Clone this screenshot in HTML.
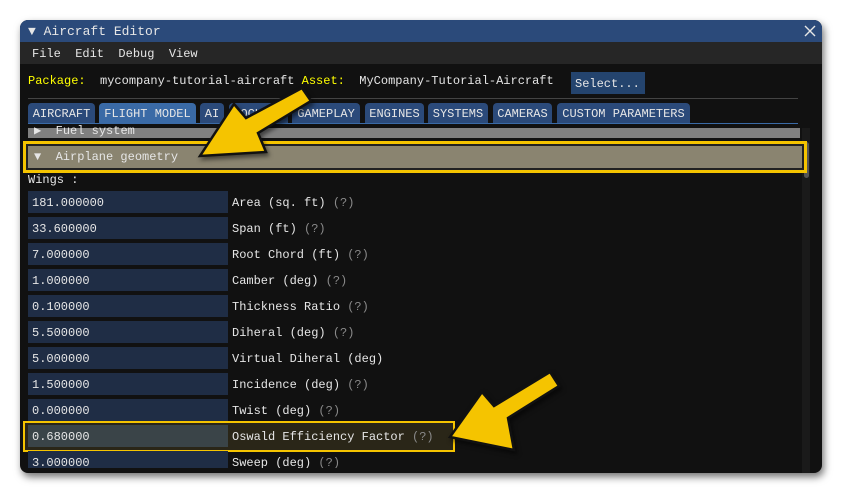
<!DOCTYPE html><html><head><style>
body{margin:0;width:842px;height:494px;background:#fff;position:relative;overflow:hidden;font-family:"Liberation Mono","DejaVu Sans Mono",monospace;font-size:12px;color:#e6e6e6}
.a{position:absolute;white-space:pre;line-height:14px}
#win{position:absolute;left:20px;top:20px;width:802px;height:453px;background:#111;border-radius:8px;overflow:hidden;box-shadow:2px 4px 8px rgba(0,0,0,.55)}
.tab{position:absolute;top:103px;height:20px;background:#2b4a7a;border-radius:4px 4px 0 0;line-height:22px;text-align:center}
.inp{position:absolute;left:28px;width:200px;height:22px;background:#1f2d45}
.g{color:#8a8a8a}
</style></head><body>
<div id="win"></div>
<div style="position:absolute;left:20px;top:20px;width:802px;height:22px;background:#2b4a7a;border-radius:8px 8px 0 0"></div>
<div class="a" style="left:28px;top:25px;font-size:13px">▼ Aircraft Editor</div>
<svg width="12" height="12" style="position:absolute;left:804px;top:25px"><path d="M1 1L11 11M11 1L1 11" stroke="#e6e6e6" stroke-width="1.4"/></svg>
<div style="position:absolute;left:20px;top:42px;width:802px;height:22px;background:#262626"></div>
<div class="a" style="left:32px;top:47px">File  Edit  Debug  View</div>
<div class="a" style="left:28px;top:74px"><span style="color:#ffff00">Package:</span>  mycompany-tutorial-aircraft <span style="color:#ffff00">Asset:</span>  MyCompany-Tutorial-Aircraft</div>
<div style="position:absolute;left:571px;top:72px;width:74px;height:22px;background:#24446e"></div>
<div class="a" style="left:575px;top:77px">Select...</div>
<div style="position:absolute;left:28px;top:98px;width:770px;height:1px;background:#444"></div>
<div class="tab" style="left:28px;width:67px">AIRCRAFT</div>
<div class="tab" style="left:99px;width:97px;background:#3a6aa6">FLIGHT MODEL</div>
<div class="tab" style="left:200px;width:24px">AI</div>
<div class="tab" style="left:229px;width:59px">COCKPIT</div>
<div class="tab" style="left:292px;width:68px">GAMEPLAY</div>
<div class="tab" style="left:365px;width:59px">ENGINES</div>
<div class="tab" style="left:428px;width:60px">SYSTEMS</div>
<div class="tab" style="left:493px;width:59px">CAMERAS</div>
<div class="tab" style="left:557px;width:133px">CUSTOM PARAMETERS</div>
<div style="position:absolute;left:28px;top:123px;width:770px;height:1px;background:#3a6aa6"></div>
<div style="position:absolute;left:28px;top:128px;width:772px;height:10px;background:#808080"></div>
<div class="a" style="left:34px;top:124px;height:14px;overflow:hidden">▶  Fuel system</div>
<div style="position:absolute;left:802px;top:128px;width:8px;height:345px;background:#1a1a1a"></div>
<div style="position:absolute;left:804px;top:142px;width:5px;height:36px;background:#555;border-radius:3px"></div>
<div style="position:absolute;left:23px;top:141px;width:778px;height:26px;background:#8a8470;border:3px solid #f5c400;box-shadow:inset 0 0 0 2px #222"></div>
<div class="a" style="left:34px;top:150px">▼  Airplane geometry</div>
<div class="a" style="left:28px;top:173px">Wings :</div>
<div class="inp" style="top:191px"></div><div class="a" style="left:32px;top:196px">181.000000</div><div class="a" style="left:232px;top:196px">Area (sq. ft) <span class="g">(?)</span></div>
<div class="inp" style="top:217px"></div><div class="a" style="left:32px;top:222px">33.600000</div><div class="a" style="left:232px;top:222px">Span (ft) <span class="g">(?)</span></div>
<div class="inp" style="top:243px"></div><div class="a" style="left:32px;top:248px">7.000000</div><div class="a" style="left:232px;top:248px">Root Chord (ft) <span class="g">(?)</span></div>
<div class="inp" style="top:269px"></div><div class="a" style="left:32px;top:274px">1.000000</div><div class="a" style="left:232px;top:274px">Camber (deg) <span class="g">(?)</span></div>
<div class="inp" style="top:295px"></div><div class="a" style="left:32px;top:300px">0.100000</div><div class="a" style="left:232px;top:300px">Thickness Ratio <span class="g">(?)</span></div>
<div class="inp" style="top:321px"></div><div class="a" style="left:32px;top:326px">5.500000</div><div class="a" style="left:232px;top:326px">Diheral (deg) <span class="g">(?)</span></div>
<div class="inp" style="top:347px"></div><div class="a" style="left:32px;top:352px">5.000000</div><div class="a" style="left:232px;top:352px">Virtual Diheral (deg)</div>
<div class="inp" style="top:373px"></div><div class="a" style="left:32px;top:378px">1.500000</div><div class="a" style="left:232px;top:378px">Incidence (deg) <span class="g">(?)</span></div>
<div class="inp" style="top:399px"></div><div class="a" style="left:32px;top:404px">0.000000</div><div class="a" style="left:232px;top:404px">Twist (deg) <span class="g">(?)</span></div>
<div style="position:absolute;left:23px;top:421px;width:428px;height:27px;background:#2a2618;border:2px solid #f5c400"></div>
<div style="position:absolute;left:28px;top:425px;width:200px;height:22px;background:#3a4448"></div>
<div class="a" style="left:32px;top:430px">0.680000</div><div class="a" style="left:232px;top:430px">Oswald Efficiency Factor <span class="g">(?)</span></div>
<div style="position:absolute;left:20px;top:451px;width:782px;height:17px;overflow:hidden">
<div class="inp" style="left:8px;top:0"></div><div class="a" style="left:12px;top:5px">3.000000</div><div class="a" style="left:212px;top:5px">Sweep (deg) <span class="g">(?)</span></div></div>
<svg width="842" height="494" style="position:absolute;left:0;top:0">
<g fill="#f5c400" stroke="#111" stroke-width="2.5" stroke-linejoin="miter" style="filter:drop-shadow(2px 3px 2px rgba(0,0,0,.5))">
<polygon points="302,88 311,101 258,133 266,152 200,156 234,104 246,118"/>
<polygon points="550,372 559,386 508,418 514,450 450,437 482,392 494,406"/>
</g></svg>
</body></html>
